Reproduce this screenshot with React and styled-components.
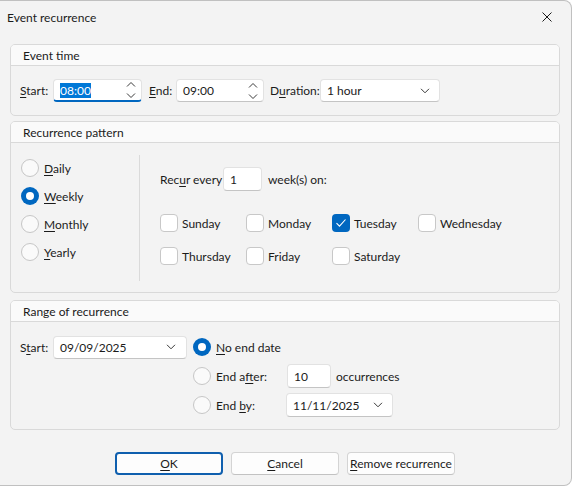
import React from "react";
import styled, { createGlobalStyle, css } from "styled-components";

const BLUE = "#0067c0";

const GlobalStyle = createGlobalStyle`
  html, body { margin: 0; padding: 0; background: #ffffff; }
  body {
    font-family: Lato, "Liberation Sans", "Noto Sans", sans-serif;
    font-size: 12px;
    color: #1b1b1b;
  }
  * { box-sizing: border-box; }
`;

const Window = styled.div`
  width: 572px;
  height: 486px;
  background: #f3f3f3;
  border: 1px solid #c0c0c0;
  border-left: none;
  border-radius: 0 8px 8px 0;
  display: flex;
  flex-direction: column;
`;

const TitleBar = styled.div`
  height: 32px;
  display: flex;
  align-items: center;
  justify-content: space-between;
  padding: 0 19px 0 7px;
`;

const Title = styled.span`
  font-size: 12px;
  color: #1b1b1b;
`;

const CloseButton = styled.button`
  border: none;
  background: transparent;
  padding: 0;
  width: 10px;
  height: 10px;
  display: flex;
`;

const Body = styled.div`
  padding: 11px 11px 0 10px;
  display: flex;
  flex-direction: column;
`;

const GroupBox = styled.section`
  border: 1px solid #d9d9d9;
  border-radius: 5px;
  background: #f3f3f3;
  margin-top: ${(p) => p.$mt || 0}px;
`;

const GroupHeader = styled.div`
  height: 21px;
  display: flex;
  align-items: center;
  padding-left: 12px;
  background: #fafafa;
  border-bottom: 1px solid #d9d9d9;
  border-radius: 4px 4px 0 0;
`;

const TimeRow = styled.div`
  display: flex;
  align-items: center;
  padding: 13px 9px 13px;
`;

const Label = styled.span`
  width: ${(p) => p.$w}px;
  flex-shrink: 0;
  white-space: nowrap;
  margin-left: ${(p) => p.$ml || 0}px;
`;

const Key = styled.u`
  text-decoration: underline;
  text-underline-offset: 2px;
  text-decoration-thickness: 1px;
`;

const Field = styled.div`
  width: ${(p) => p.$w}px;
  height: ${(p) => p.$h || 23}px;
  flex-shrink: 0;
  background: #ffffff;
  border: 1px solid #e2e2e2;
  border-bottom: ${(p) => (p.$focused ? `2px solid ${BLUE}` : "1px solid #c4c4c4")};
  border-radius: 4px;
  display: flex;
  align-items: center;
  justify-content: space-between;
  padding: 0 ${(p) => p.$pr ?? 6}px 0 6px;
  margin-left: ${(p) => p.$ml || 0}px;
`;

const Selected = styled.span`
  background: #0078d7;
  color: #ffffff;
  line-height: 15px;
`;

const PatternBody = styled.div`
  display: flex;
  padding: 12px 0 11px 10px;
`;

const RadioColumn = styled.div`
  width: 119px;
  height: 126px;
  border-right: 1px solid #dadada;
  display: flex;
  flex-direction: column;
  gap: 10px;
  padding-top: 4px;
`;

const OptionRow = styled.label`
  display: flex;
  align-items: center;
  gap: ${(p) => p.$gap ?? 5}px;
  height: 18px;
  white-space: nowrap;
`;

const Radio = styled.span`
  width: 18px;
  height: 18px;
  border-radius: 50%;
  flex-shrink: 0;
  ${(p) =>
    p.$checked
      ? css`
          background: ${BLUE};
          display: flex;
          align-items: center;
          justify-content: center;
          &::after {
            content: "";
            width: 8px;
            height: 8px;
            border-radius: 50%;
            background: #ffffff;
          }
        `
      : css`
          background: #fafafa;
          border: 1px solid #c6c6c6;
        `}
`;

const Check = styled.span`
  width: 18px;
  height: 18px;
  border-radius: 4px;
  flex-shrink: 0;
  display: flex;
  align-items: center;
  justify-content: center;
  background: ${(p) => (p.$checked ? BLUE : "#ffffff")};
  border: ${(p) => (p.$checked ? "none" : "1px solid #c8c8c8")};
`;

const WeekPane = styled.div`
  padding-left: 20px;
`;

const RecurRow = styled.div`
  display: flex;
  align-items: center;
  height: 24px;
  margin-top: 12px;
`;

const DaysGrid = styled.div`
  display: grid;
  grid-template-columns: repeat(4, 86px);
  row-gap: 15px;
  margin-top: 23px;
`;

const RangeBody = styled.div`
  display: flex;
  align-items: flex-start;
  padding: 13px 9px 12px;
`;

const StartGroup = styled.div`
  display: flex;
  align-items: center;
  height: 24px;
`;

const EndColumn = styled.div`
  display: flex;
  flex-direction: column;
  gap: 5px;
  margin-left: 6px;
`;

const EndRow = styled.div`
  display: flex;
  align-items: center;
  height: 24px;
`;

const Footer = styled.div`
  display: flex;
  justify-content: center;
  gap: 8px;
  margin-top: 22px;
`;

const Button = styled.button`
  width: 108px;
  height: 23px;
  font-family: inherit;
  font-size: 12px;
  color: #1b1b1b;
  background: #fdfdfd;
  border: ${(p) => (p.$default ? `2px solid #0f5fae` : "1px solid #d4d4d4")};
  border-bottom-color: ${(p) => (p.$default ? "#0f5fae" : "#c2c2c2")};
  border-radius: 4px;
  padding: 0;
`;

const Spin = () => (
  <svg width="10" height="18" viewBox="0 0 10 18" fill="none">
    <path d="M1 5.5 L5 1.5 L9 5.5" stroke="#3a3a3a" strokeWidth="1" />
    <path d="M1 12.5 L5 16.5 L9 12.5" stroke="#3a3a3a" strokeWidth="1" />
  </svg>
);

const Chevron = () => (
  <svg width="10" height="6" viewBox="0 0 10 6" fill="none">
    <path d="M1 0.8 L5 4.8 L9 0.8" stroke="#3a3a3a" strokeWidth="1" />
  </svg>
);

const CheckMark = () => (
  <svg width="12" height="10" viewBox="0 0 12 10" fill="none">
    <path d="M1.5 5.2 L4.5 8.2 L10.5 1.5" stroke="#ffffff" strokeWidth="1.1" />
  </svg>
);

const CloseIcon = () => (
  <svg width="10" height="10" viewBox="0 0 10 10" fill="none">
    <path d="M0.5 0.5 L9.5 9.5 M9.5 0.5 L0.5 9.5" stroke="#1b1b1b" strokeWidth="1" />
  </svg>
);

const Day = ({ name, checked }) => (
  <OptionRow $gap={4}>
    <Check $checked={checked}>{checked && <CheckMark />}</Check>
    <span>{name}</span>
  </OptionRow>
);

const Opt = ({ k, rest, checked }) => (
  <OptionRow>
    <Radio $checked={checked} />
    <span>
      <Key>{k}</Key>
      {rest}
    </span>
  </OptionRow>
);

export default function App() {
  return (
    <>
      <GlobalStyle />
      <Window>
        <TitleBar>
          <Title>Event recurrence</Title>
          <CloseButton aria-label="Close">
            <CloseIcon />
          </CloseButton>
        </TitleBar>
        <Body>
          <GroupBox>
            <GroupHeader>Event time</GroupHeader>
            <TimeRow>
              <Label $w={33}>
                <Key>S</Key>tart:
              </Label>
              <Field $w={89} $focused $pr={5}>
                <Selected>08:00</Selected>
                <Spin />
              </Field>
              <Label $w={27} $ml={7}>
                <Key>E</Key>nd:
              </Label>
              <Field $w={88} $pr={5}>
                <span>09:00</span>
                <Spin />
              </Field>
              <Label $w={50} $ml={6}>
                D<Key>u</Key>ration:
              </Label>
              <Field $w={120} $pr={9}>
                <span>1 hour</span>
                <Chevron />
              </Field>
            </TimeRow>
          </GroupBox>

          <GroupBox $mt={5}>
            <GroupHeader>Recurrence pattern</GroupHeader>
            <PatternBody>
              <RadioColumn>
                <Opt k="D" rest="aily" />
                <Opt k="W" rest="eekly" checked />
                <Opt k="M" rest="onthly" />
                <Opt k="Y" rest="early" />
              </RadioColumn>
              <WeekPane>
                <RecurRow>
                  <Label $w={63}>
                    Rec<Key>u</Key>r every
                  </Label>
                  <Field $w={39} $h={24}>
                    <span>1</span>
                  </Field>
                  <Label $ml={6}>week(s) on:</Label>
                </RecurRow>
                <DaysGrid>
                  <Day name="Sunday" />
                  <Day name="Monday" />
                  <Day name="Tuesday" checked />
                  <Day name="Wednesday" />
                  <Day name="Thursday" />
                  <Day name="Friday" />
                  <Day name="Saturday" />
                </DaysGrid>
              </WeekPane>
            </PatternBody>
          </GroupBox>

          <GroupBox $mt={7}>
            <GroupHeader>Range of recurrence</GroupHeader>
            <RangeBody>
              <StartGroup>
                <Label $w={33}>
                  S<Key>t</Key>art:
                </Label>
                <Field $w={134} $pr={10}>
                  <span>09/09/2025</span>
                  <Chevron />
                </Field>
              </StartGroup>
              <EndColumn>
                <EndRow>
                  <Opt k="N" rest="o end date" checked />
                </EndRow>
                <EndRow>
                  <OptionRow>
                    <Radio />
                    <Label $w={71}>
                      End a<Key>f</Key>ter:
                    </Label>
                  </OptionRow>
                  <Field $w={44} $h={24}>
                    <span>10</span>
                  </Field>
                  <Label $ml={5}>occurrences</Label>
                </EndRow>
                <EndRow>
                  <OptionRow>
                    <Radio />
                    <Label $w={70}>
                      End <Key>b</Key>y:
                    </Label>
                  </OptionRow>
                  <Field $w={107} $h={24} $pr={9}>
                    <span>11/11/2025</span>
                    <Chevron />
                  </Field>
                </EndRow>
              </EndColumn>
            </RangeBody>
          </GroupBox>

          <Footer>
            <Button $default>
              <Key>O</Key>K
            </Button>
            <Button>
              <Key>C</Key>ancel
            </Button>
            <Button>
              <Key>R</Key>emove recurrence
            </Button>
          </Footer>
        </Body>
      </Window>
    </>
  );
}
